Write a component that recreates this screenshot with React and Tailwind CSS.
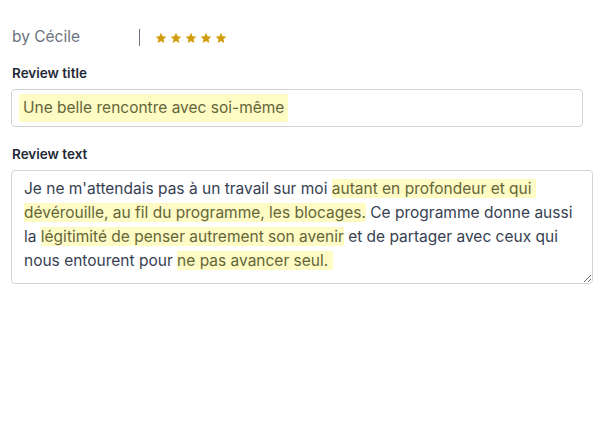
import React from "react";

function Star() {
  return (
    <svg width="12" height="12" viewBox="0 0 24 24" className="block">
      <path
        fill="#d19c0b"
        d="M12 1.5l3.1 7.1 7.7.7-5.8 5.1 1.7 7.6L12 18l-6.7 4 1.7-7.6-5.8-5.1 7.7-.7z"
      />
    </svg>
  );
}

const hl = "bg-[#fefbc4] text-[#65653a]";

export default function App() {
  return (
    <div
      className="bg-white min-h-[423px] pl-[11px] pt-[25px] text-[#374151]"
      style={{ fontFamily: "Inter, 'Liberation Sans', sans-serif" }}
    >
      <div className="flex items-center h-6">
        <div className="w-[128px] text-[15.5px] text-[#6b7280] pl-px">by Cécile</div>
        <div className="w-px h-[17px] bg-[#6b7280]" />
        <div className="flex items-center gap-[3px] ml-[15px] mt-[2px]">
          <Star />
          <Star />
          <Star />
          <Star />
          <Star />
        </div>
      </div>

      <div className="mt-[14px] text-[13.5px] leading-5 font-semibold text-[#1f2937] pl-px">
        Review title
      </div>
      <div className="mt-[6px] w-[572px] h-[38px] rounded border border-[#d1d5db] pl-[7px] py-[3px] flex items-center">
        <span className={`inline-block px-1 leading-7 text-[15.5px] ${hl}`}>
          Une belle rencontre avec soi-même
        </span>
      </div>

      <div className="mt-[17px] text-[13.5px] leading-5 font-semibold text-[#1f2937] pl-px">
        Review text
      </div>
      <div className="mt-[6px] w-[582px] h-[114px] rounded border border-[#d1d5db] px-3 pt-[6px] text-[15.5px] leading-6 resize overflow-auto">
        <div className="whitespace-pre">
          Je ne m'attendais pas à un travail sur moi <span className={hl}>autant en profondeur et qui </span>
        </div>
        <div className="whitespace-pre">
          <span className={hl}>dévérouille, au fil du programme, les blocages.</span> Ce programme donne aussi
        </div>
        <div className="whitespace-pre">
          la <span className={hl}>légitimité de penser autrement son avenir</span> et de partager avec ceux qui
        </div>
        <div className="whitespace-pre">
          nous entourent pour <span className={hl}>ne pas avancer seul. </span>
        </div>
      </div>
    </div>
  );
}
